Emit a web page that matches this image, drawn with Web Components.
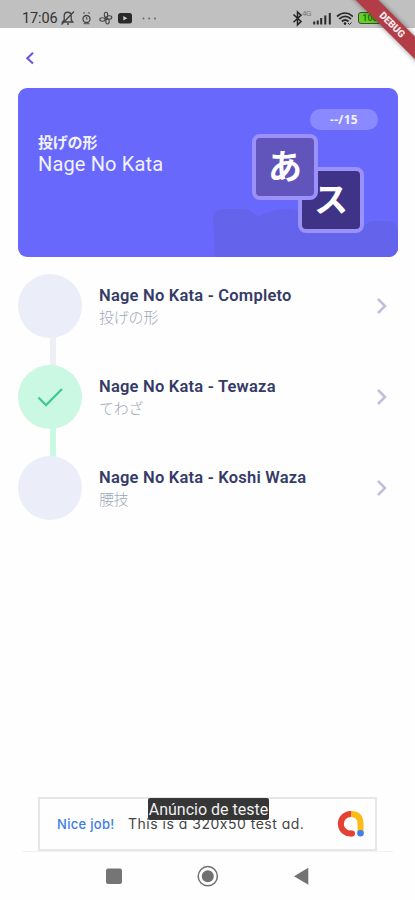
<!DOCTYPE html>
<html lang="pt-BR">
<head>
<meta charset="utf-8">
<title>Nage No Kata</title>
<style>
html,body{margin:0;background:#fefefe}
body{width:415px;height:900px;overflow:hidden;font-family:Roboto,"Noto Sans CJK JP",sans-serif}
</style>
</head>
<body>
<kata-app></kata-app>
<script>
function define(name, html) {
  const template = document.createElement('template');
  template.innerHTML = html;
  customElements.define(name, class extends HTMLElement {
    constructor() {
      super();
      this.attachShadow({ mode: 'open' }).append(template.content.cloneNode(true));
    }
  });
}

define('status-bar', `
<style>
:host{display:flex;height:28px;background:#c0c0c0;color:#333;box-sizing:border-box;padding:8px 0 0 22px;align-items:flex-start}
.time{font-size:14.5px;line-height:21px;width:38px;white-space:nowrap;letter-spacing:-.1px}
svg{display:block;flex:none}
.gap{flex:1}
.net{font-size:8px;line-height:8px;color:#777;width:9px;margin:2px 2px 0 -2px;letter-spacing:-.5px}
.bat{margin:4px 0 0 5px;width:24px;height:12px;box-sizing:border-box;border:1px solid #444;border-radius:3px;background:#62d321;color:#257b0b;font:700 9px/10px Roboto,sans-serif;text-align:center}
.end{width:33px}
</style>
<span class="time">17:06</span>
<svg width="102" height="20" viewBox="60 8 102 20" fill="none" stroke="#444" stroke-width="1.3">
<path d="M62.5 22h10.3l-1.6-2v-4c0-5-7-5-7 0v4zM67 24h2M61.500 24.500L74 11.500"/>
<circle cx="86.500" cy="19" r="3.500"/><path d="M83 13.300l2-.7M88 12.600l2 .7M86.500 17v2h1.500M83.500 23.700h6" stroke-width="1.200" stroke="#666"/>
<g stroke-width="1.100"><ellipse cx="106" cy="14.800" rx="1.700" ry="2.500"/><ellipse cx="109.300" cy="17.500" rx="2.500" ry="1.700"/><ellipse cx="107.500" cy="21.500" rx="1.700" ry="2.500"/><ellipse cx="102.500" cy="19.500" rx="2.700" ry="1.700"/><circle cx="106" cy="18.200" r="1"/></g>
<rect x="118" y="13" width="14" height="10.500" rx="2.500" fill="#292929" stroke="none"/><path d="M123.300 16v4.500l4-2.250z" fill="#ccc" stroke="none"/>
<g fill="#666" stroke="none"><circle cx="143.500" cy="18.500" r="1"/><circle cx="149.200" cy="18.500" r="1"/><circle cx="155" cy="18.500" r="1"/></g>
</svg>
<span class="gap"></span>
<svg width="12" height="20" viewBox="292 8 12 20" fill="none" stroke="#222" stroke-width="1.500"><path d="M293.500 14.500l7.500 7-3.500 3.500V12l3.500 3.300-7.500 7"/></svg>
<span class="net">4G</span>
<svg width="40" height="20" viewBox="311 8 40 20" fill="none" stroke="#292929"><path d="M312.200 21.500v3M315.700 20.500v4M319.200 18v6.500M323.300 15.500v9M327.800 13v11.500" stroke-width="2"/><path d="M335 16.500c5-4.500 11-4.500 16 0M337.300 19c3.700-3.200 8-3.200 11.700 0M339.800 21.500c2-1.800 4.700-1.800 6.700 0" stroke-width="1.700"/><circle cx="343" cy="23.600" r="1.300" fill="#222" stroke="none"/><path d="M346 23l1.500 1.500 2-2"/></svg>
<span class="bat">100</span>
<span class="end"></span>`);

define('debug-banner', `
<style>
:host{position:absolute;right:0;top:0;width:75px;height:75px;overflow:hidden;pointer-events:none}
div{position:absolute;width:120px;height:16px;left:-8px;top:17px;transform:rotate(45deg);background:#b33d47;box-shadow:0 0 5px #0007;color:#f5e9eb;font:900 10px/16px Roboto,sans-serif;text-align:center;letter-spacing:-.1px}
</style><div>DEBUG</div>`);

define('nav-back', `
<style>:host{display:flex;height:60px;align-items:center;padding-left:24px}svg{display:block}</style>
<svg width="12" height="16" viewBox="0 0 12 16" fill="none" stroke="#6a57dc" stroke-width="2.100"><path d="M9 2.800L3.300 8.200 9 13.600"/></svg>`);

define('kana-tile', `
<style>
:host{position:absolute;box-sizing:border-box;width:66px;height:66px;border:4px solid #9b91fa;border-radius:8px;background:var(--tile);color:#fff;display:flex;justify-content:center;font:700 34px/54px "Noto Sans CJK JP",sans-serif}
</style><slot></slot>`);

define('kata-hero', `
<style>
:host{display:block;position:relative;margin:0 17px 0 18px;height:169px;border-radius:9px;background:#6869fc;overflow:hidden;color:#f2f2ff}
.shape{position:absolute;right:0;bottom:0}
.copy{padding:43px 0 0 20px}
.jp{font:700 15px/22px "Noto Sans CJK JP",sans-serif;letter-spacing:-.2px}
.name{font-size:20px;line-height:22px;letter-spacing:.15px}
.pill{position:absolute;left:292px;top:21px;width:68px;height:21px;border-radius:11px;background:#8b89ff;font:700 12px/21px "Open Sans",sans-serif;text-align:center;letter-spacing:.3px}
.a{--tile:#6154bb;left:234px;top:46px}
.b{--tile:#3f3387;left:280px;top:79px}
</style>
<svg class="shape" width="190" height="52" viewBox="208 205 190 52"><path d="M215 257l-2-36q0-12 11-12h18q9 0 16 8 22-12 41-6l66 15q3-5 10-5h12q9 0 11 10v26z" fill="#6363eb"/></svg>
<div class="copy"><div class="jp"><slot name="jp"></slot></div><div class="name"><slot></slot></div></div>
<div class="pill"><slot name="count"></slot></div>
<kana-tile class="b">ス</kana-tile><kana-tile class="a">あ</kana-tile>`);

define('kata-step', `
<style>
:host{display:flex;position:relative;height:91px;padding:0 26px 0 18px}
.rail{width:64px;display:flex;flex-direction:column;align-items:center;flex:none}
.dot{width:64px;height:64px;border-radius:50%;background:var(--dot,#ebeef8);display:flex;align-items:center;justify-content:center;flex:none}
.line{width:6px;height:29px;margin:-1px 0 -1px 5px;background:var(--line,#eeeff6)}
.text{flex:1;padding:11px 0 0 17px;white-space:nowrap}
.title{font-size:16.5px;line-height:22px;font-weight:600;color:#343b67;letter-spacing:.22px}
.sub{font:300 15px/20px "Noto Sans CJK JP",sans-serif;color:#a0a8b8;letter-spacing:-.2px}
.chev{margin-top:23px;flex:none}
</style>
<div class="rail"><div class="dot"><slot name="mark"></slot></div><div class="line"></div></div>
<div class="text"><div class="title"><slot></slot></div><div class="sub"><slot name="jp"></slot></div></div>
<svg class="chev" width="14" height="18" viewBox="0 0 14 18" fill="none" stroke="#bfbfd9" stroke-width="2.500"><path d="M3 2l7 7-7 7"/></svg>`);

define('ad-banner', `
<style>
:host{display:flex;position:relative;box-sizing:border-box;margin:0 38px;height:54px;border:2px solid #e5e8e9;color:#454545;font:13px/54px Inter,sans-serif;font-feature-settings:"cv11","calt" 0;align-items:center}
.nice{color:#3b7de7;font-weight:500;padding-left:17px;white-space:nowrap;flex:none;width:71px;letter-spacing:.3px}
.msg{white-space:nowrap;flex:1;font-size:14px;letter-spacing:.5px}
.label{position:absolute;left:108px;top:-1px;width:121px;height:22px;border-radius:2px;background:#363636;color:#f0f0f0;font:16px/23px Roboto,sans-serif;text-align:center;white-space:nowrap}
svg{flex:none;margin-right:10px}
</style>
<span class="nice">Nice job!</span><span class="msg">This is a 320x50 test ad.</span>
<svg width="28" height="28" viewBox="0 0 28 28" fill="none" stroke-width="6"><path d="M14 4Q23.500 4 23.500 14v9" stroke="#fbbc17"/><path d="M14 4A9.800 9.800 0 1 0 15 23.500" stroke="#e34133"/><circle cx="15" cy="23.500" r="3" fill="#e34133"/><circle cx="23.500" cy="23.200" r="3.300" fill="#3e7ded"/></svg>
<span class="label">Anúncio de teste</span>`);

define('system-nav', `
<style>
:host{display:flex;margin:0 22px;border-top:1px solid #f2f2f2;height:48px;align-items:center;justify-content:center}
svg{display:block}
</style>
<svg width="220" height="24" viewBox="98 863 220 24"><rect x="106" y="867.500" width="16" height="15.500" rx="2" fill="#757575"/><circle cx="207.800" cy="875.200" r="9.600" fill="none" stroke="#707070" stroke-width="1.500"/><circle cx="207.800" cy="875.200" r="6" fill="#707070"/><path d="M294 875.200l14.300-8.500v17z" fill="#737373"/></svg>`);

define('kata-app', `
<style>
:host{display:flex;flex-direction:column;position:relative;width:415px;height:900px;overflow:hidden}
main{flex:1;padding-top:17px}
.done{--dot:#cbf8e2;--line:#cbf8e2}
.last{--line:transparent}
.done svg{display:block}
</style>
<status-bar></status-bar>
<nav-back></nav-back>
<kata-hero><span slot="jp">投げの形</span>Nage No Kata<span slot="count">--/15</span></kata-hero>
<main>
<kata-step>Nage No Kata - Completo<span slot="jp">投げの形</span></kata-step>
<kata-step class="done">Nage No Kata - Tewaza<span slot="jp">てわざ</span><svg slot="mark" width="28" height="24" viewBox="0 0 28 24" fill="none" stroke="#43c893" stroke-width="2.300"><path d="M2.500 12.500l7.500 7.500L26 4"/></svg></kata-step>
<kata-step class="last">Nage No Kata - Koshi Waza<span slot="jp">腰技</span></kata-step>
</main>
<ad-banner></ad-banner>
<system-nav></system-nav>
<debug-banner></debug-banner>`);
</script>
</body>
</html>
